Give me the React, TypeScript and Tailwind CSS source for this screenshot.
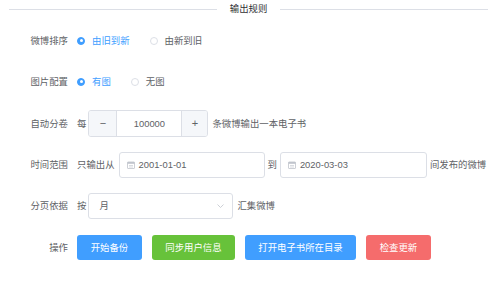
import React, { useState } from "react";

const font = { fontFamily: '"Liberation Sans", "Noto Sans CJK SC", sans-serif' };

function Radio({ checked, label, onClick }: { checked: boolean; label: string; onClick: () => void }) {
  return (
    <label onClick={onClick} className="flex items-center cursor-pointer mr-[20px]">
      <span
        className={
          checked
            ? "flex items-center justify-center w-[8px] h-[8px] rounded-full bg-[#409eff] border border-[#409eff]"
            : "flex items-center justify-center w-[8px] h-[8px] rounded-full bg-white border border-[#dcdfe6]"
        }
      >
        {checked && <span className="w-[3px] h-[3px] rounded-full bg-white" />}
      </span>
      <span className={checked ? "ml-[7px] text-[#409eff]" : "ml-[7px] text-[#606266]"}>{label}</span>
    </label>
  );
}

function CalendarIcon() {
  return (
    <svg width="8" height="8" viewBox="0 0 8 8" className="shrink-0">
      <rect x="0.5" y="1" width="7" height="6.5" rx="0.5" fill="none" stroke="#c0c4cc" strokeWidth="0.8" />
      <rect x="0.5" y="1" width="7" height="1.8" fill="#c0c4cc" />
      <line x1="2" y1="4.5" x2="6" y2="4.5" stroke="#c0c4cc" strokeWidth="0.6" />
      <line x1="2" y1="6" x2="6" y2="6" stroke="#c0c4cc" strokeWidth="0.6" />
    </svg>
  );
}

function Row({ label, children }: { label: string; children: React.ReactNode }) {
  return (
    <div className="flex items-center h-[27px]">
      <div className="w-[69px] text-right pr-[1px] text-[#606266]">{label}</div>
      <div className="flex items-center ml-[8px]">{children}</div>
    </div>
  );
}

export default function App() {
  const [order, setOrder] = useState("old");
  const [pic, setPic] = useState("yes");
  const [count, setCount] = useState(100000);

  return (
    <div className="w-[500px] h-[283px] bg-white text-[9.4px] leading-none" style={font}>
      <div className="flex items-center h-[18px] pl-[9px] pr-[12px]">
        <div className="flex-1 h-px bg-[#dcdfe6]" />
        <span className="px-[13px] text-[#303133]">输出规则</span>
        <div className="flex-1 h-px bg-[#dcdfe6]" />
      </div>

      <div className="flex flex-col gap-[14.4px] mt-[9px]">
        <Row label="微博排序">
          <Radio checked={order === "old"} label="由旧到新" onClick={() => setOrder("old")} />
          <Radio checked={order === "new"} label="由新到旧" onClick={() => setOrder("new")} />
        </Row>

        <Row label="图片配置">
          <Radio checked={pic === "yes"} label="有图" onClick={() => setPic("yes")} />
          <Radio checked={pic === "no"} label="无图" onClick={() => setPic("no")} />
        </Row>

        <Row label="自动分卷">
          <span className="text-[#606266] mr-[2px]">每</span>
          <div className="flex w-[120px] h-[27px] border border-[#dcdfe6] rounded-[3px] overflow-hidden">
            <button
              onClick={() => setCount(count - 1)}
              className="w-[28px] bg-[#f5f7fa] border-r border-[#dcdfe6] text-[#606266] text-[11px]"
            >
              −
            </button>
            <div className="flex-1 flex items-center justify-center text-[#606266]">{count}</div>
            <button
              onClick={() => setCount(count + 1)}
              className="w-[26px] bg-[#f5f7fa] border-l border-[#dcdfe6] text-[#606266] text-[11px]"
            >
              +
            </button>
          </div>
          <span className="text-[#606266] ml-[4px]">条微博输出一本电子书</span>
        </Row>

        <Row label="时间范围">
          <span className="text-[#606266] mr-[4px]">只输出从</span>
          <div className="flex items-center w-[146px] h-[26px] border border-[#dcdfe6] rounded-[3px] pl-[7px]">
            <CalendarIcon />
            <span className="ml-[4px] text-[#606266]">2001-01-01</span>
          </div>
          <span className="text-[#606266] mx-[3px]">到</span>
          <div className="flex items-center w-[147px] h-[26px] border border-[#dcdfe6] rounded-[3px] pl-[7px]">
            <CalendarIcon />
            <span className="ml-[4px] text-[#606266]">2020-03-03</span>
          </div>
          <span className="text-[#606266] ml-[3px]">间发布的微博</span>
        </Row>

        <Row label="分页依据">
          <span className="text-[#606266] mr-[2px]">按</span>
          <div className="flex items-center justify-between w-[145px] h-[26px] border border-[#dcdfe6] rounded-[3px] pl-[10px] pr-[8px]">
            <span className="text-[#606266]">月</span>
            <svg width="7" height="4" viewBox="0 0 7 4">
              <path d="M0.5 0.5 L3.5 3.5 L6.5 0.5" fill="none" stroke="#c0c4cc" strokeWidth="0.8" />
            </svg>
          </div>
          <span className="text-[#606266] ml-[4px]">汇集微博</span>
        </Row>

        <Row label="操作">
          <div className="flex gap-[10px]">
            <button className="w-[65px] h-[25px] rounded-[3px] bg-[#409eff] text-white">开始备份</button>
            <button className="w-[83px] h-[25px] rounded-[3px] bg-[#67c23a] text-white">同步用户信息</button>
            <button className="w-[111px] h-[25px] rounded-[3px] bg-[#409eff] text-white">打开电子书所在目录</button>
            <button className="w-[65px] h-[25px] rounded-[3px] bg-[#f56c6c] text-white">检查更新</button>
          </div>
        </Row>
      </div>
    </div>
  );
}
